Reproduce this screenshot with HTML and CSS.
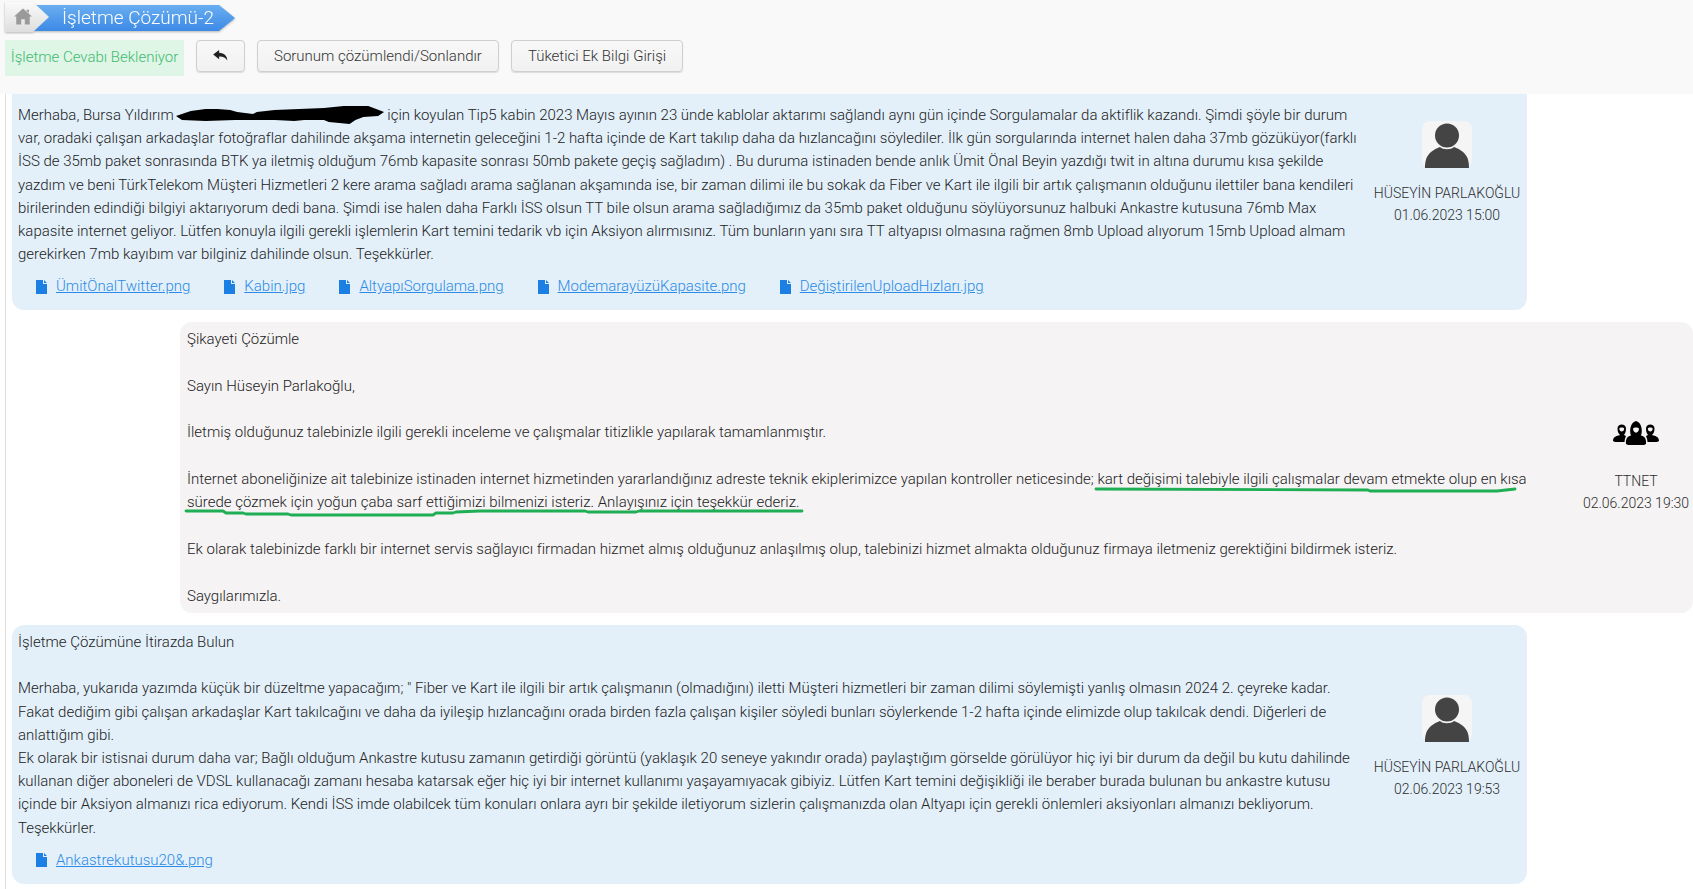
FILE: index.html
```html
<!DOCTYPE html>
<html lang="tr">
<head>
<meta charset="utf-8">
<title>İşletme Çözümü-2</title>
<link rel="stylesheet" href="styles.css">
</head>
<body>
<header class="topbar">
  <nav class="crumbs">
    <a class="crumb-home">
      <svg class="home-icon" viewBox="0 0 20 18" width="18" height="17"><path d="M10 0 L20 9 L17.5 9 L17.5 18 L12 18 L12 12 L8 12 L8 18 L2.5 18 L2.5 9 L0 9 Z M14 1.5 h2.5 v3.5 L14 3 Z" fill="#9a9a9a"/></svg>
    </a>
    <a class="crumb-page">İşletme Çözümü-2</a>
  </nav>
  <div class="actions">
    <span class="status">İşletme Cevabı Bekleniyor</span>
    <button class="btn btn-back" aria-label="Geri">
      <svg viewBox="0 0 16 12" width="15" height="11"><path d="M6.5 0 L0 5 L6.5 10 L6.5 7 C10.5 6.8 13.5 8 15.5 11.5 C15.3 6.5 12 3.2 6.5 3 Z" fill="#222"/></svg>
    </button>
    <button class="btn">Sorunum çözümlendi/Sonlandır</button>
    <button class="btn">Tüketici Ek Bilgi Girişi</button>
  </div>
</header>

<main class="thread">
  <article class="msg msg-user msg-first">
    <div class="msg-body">
      <p>Merhaba, Bursa Yıldırım<span class="redacted"><svg class="scribble" viewBox="0 0 215 18" preserveAspectRatio="none"><path d="M0 10 L15 5 L30 3 L42 3 L55 4 L62 6 L78 8 L82 6 L100 4 L125 3 L150 2 L170 0 L195 0 L211 6 L205 10 L190 11 L182 14 L176 18 L155 16 L150 14 L130 14 L120 15 L100 14 L60 14 L30 15 L6 14 Z" fill="#000"/></svg></span> için koyulan Tip5 kabin 2023 Mayıs ayının 23 ünde kablolar aktarımı sağlandı aynı gün içinde Sorgulamalar da aktiflik kazandı. Şimdi şöyle bir durum<br>
      var, oradaki çalışan arkadaşlar fotoğraflar dahilinde akşama internetin geleceğini 1-2 hafta içinde de Kart takılıp daha da hızlancağını söylediler. İlk gün sorgularında internet halen daha 37mb gözüküyor(farklı<br>
      İSS de 35mb paket sonrasında BTK ya iletmiş olduğum 76mb kapasite sonrası 50mb pakete geçiş sağladım) . Bu duruma istinaden bende anlık Ümit Önal Beyin yazdığı twit in altına durumu kısa şekilde<br>
      yazdım ve beni TürkTelekom Müşteri Hizmetleri 2 kere arama sağladı arama sağlanan akşamında ise, bir zaman dilimi ile bu sokak da Fiber ve Kart ile ilgili bir artık çalışmanın olduğunu ilettiler bana kendileri<br>
      birilerinden edindiği bilgiyi aktarıyorum dedi bana. Şimdi ise halen daha Farklı İSS olsun TT bile olsun arama sağladığımız da 35mb paket olduğunu söylüyorsunuz halbuki Ankastre kutusuna 76mb Max<br>
      kapasite internet geliyor. Lütfen konuyla ilgili gerekli işlemlerin Kart temini tedarik vb için Aksiyon alırmısınız. Tüm bunların yanı sıra TT altyapısı olmasına rağmen 8mb Upload alıyorum 15mb Upload almam<br>
      gerekirken 7mb kayıbım var bilginiz dahilinde olsun. Teşekkürler.</p>
      <ul class="files">
        <li><svg class="file-icon" viewBox="0 0 11 14"><path d="M0 0 H7 V4 H11 V14 H0 Z M8 0 L11 3 H8 Z" fill="#1b7fe3"/></svg><a>ÜmitÖnalTwitter.png</a></li>
        <li><svg class="file-icon" viewBox="0 0 11 14"><path d="M0 0 H7 V4 H11 V14 H0 Z M8 0 L11 3 H8 Z" fill="#1b7fe3"/></svg><a>Kabin.jpg</a></li>
        <li><svg class="file-icon" viewBox="0 0 11 14"><path d="M0 0 H7 V4 H11 V14 H0 Z M8 0 L11 3 H8 Z" fill="#1b7fe3"/></svg><a>AltyapıSorgulama.png</a></li>
        <li><svg class="file-icon" viewBox="0 0 11 14"><path d="M0 0 H7 V4 H11 V14 H0 Z M8 0 L11 3 H8 Z" fill="#1b7fe3"/></svg><a>ModemarayüzüKapasite.png</a></li>
        <li><svg class="file-icon" viewBox="0 0 11 14"><path d="M0 0 H7 V4 H11 V14 H0 Z M8 0 L11 3 H8 Z" fill="#1b7fe3"/></svg><a>DeğiştirilenUploadHızları.jpg</a></li>
      </ul>
    </div>
    <aside class="author author-user">
      <span class="avatar"><svg viewBox="0 0 50 47" width="50" height="47"><circle cx="25" cy="14.5" r="12" fill="#444"/><path d="M3 47 C3 45 3 40 5 36 C8 30 15 27 18 26 C21 29 29 29 32 26 C35 27 42 30 45 36 C47 40 47 45 47 47 Z" fill="#444"/></svg></span>
      <span class="who">HÜSEYİN PARLAKOĞLU</span>
      <span class="when">01.06.2023 15:00</span>
    </aside>
  </article>

  <article class="msg msg-company">
    <div class="msg-body">
      <p>Şikayeti Çözümle<br><br>
      Sayın Hüseyin Parlakoğlu,<br><br>
      İletmiş olduğunuz talebinizle ilgili gerekli inceleme ve çalışmalar titizlikle yapılarak tamamlanmıştır.<br><br>
      İnternet aboneliğinize ait talebinize istinaden internet hizmetinden yararlandığınız adreste teknik ekiplerimizce yapılan kontroller neticesinde; kart değişimi talebiyle ilgili çalışmalar devam etmekte olup en kısa<br>
      sürede çözmek için yoğun çaba sarf ettiğimizi bilmenizi isteriz. Anlayışınız için teşekkür ederiz.<br><br>
      Ek olarak talebinizde farklı bir internet servis sağlayıcı firmadan hizmet almış olduğunuz anlaşılmış olup, talebinizi hizmet almakta olduğunuz firmaya iletmeniz gerektiğini bildirmek isteriz.<br><br>
      Saygılarımızla.</p>
      <svg class="marker" viewBox="0 0 1400 60" width="1400" height="60"><path d="M910 15 L1182 16 L1184 17 L1311 17 L1329 15 M0 37 L37 37 L40 39 L57 39 L60 40 L102 40 L105 41 L247 41 L250 39 L267 39 L270 38 L294 37 L399 37 L402 38 L450 38 L453 37 L616 37" fill="none" stroke="#1fae54" stroke-width="2.8" stroke-linecap="round" stroke-linejoin="round"/></svg>
    </div>
    <aside class="author author-company">
      <svg class="team" viewBox="0 0 46 24" width="46" height="24"><path fill-rule="evenodd" fill="#000" d="M0 20 C0 16 3 15 7 14 C5 12 4.500 10 4.500 7.500 C4.500 2 13 2 13 7.500 C13 10 12.500 12 11 14 L13 15 C12 17 11.500 19 11.500 21 L2 21 Z M6.300 7.500 C6.300 11.500 11.200 11.500 11.200 7.500 C11 6 6.500 6 6.300 7.500 Z"/><path fill-rule="evenodd" fill="#000" d="M46 20 C46 16 43 15 39 14 C41 12 41.500 10 41.500 7.500 C41.500 2 33 2 33 7.500 C33 10 33.500 12 35 14 L33 15 C34 17 34.500 19 34.500 21 L44 21 Z M39.700 7.500 C39.700 11.500 34.800 11.500 34.800 7.500 C35 6 39.500 6 39.700 7.500 Z"/><path fill="#000" d="M13 23 C12.500 18 14 15.500 18 14.500 C16.500 11 16.500 2 23 0 C29.500 2 29.500 11 28 14.500 C32 15.500 33.500 18 33 23 L31 24 L15 24 Z"/><path fill="#f5f3f4" d="M20 7.500 C20 13 26 13 26 7.500 C25 6 21 6 20 7.500 Z"/></svg>
      <span class="who">TTNET</span>
      <span class="when">02.06.2023 19:30</span>
    </aside>
  </article>

  <article class="msg msg-user msg-last">
    <div class="msg-body">
      <p>İşletme Çözümüne İtirazda Bulun<br><br>
      Merhaba, yukarıda yazımda küçük bir düzeltme yapacağım; " Fiber ve Kart ile ilgili bir artık çalışmanın (olmadığını) iletti Müşteri hizmetleri bir zaman dilimi söylemişti yanlış olmasın 2024 2. çeyreke kadar.<br>
      Fakat dediğim gibi çalışan arkadaşlar Kart takılcağını ve daha da iyileşip hızlancağını orada birden fazla çalışan kişiler söyledi bunları söylerkende 1-2 hafta içinde elimizde olup takılcak dendi. Diğerleri de<br>
      anlattığım gibi.<br>
      Ek olarak bir istisnai durum daha var; Bağlı olduğum Ankastre kutusu zamanın getirdiği görüntü (yaklaşık 20 seneye yakındır orada) paylaştığım görselde görülüyor hiç iyi bir durum da değil bu kutu dahilinde<br>
      kullanan diğer aboneleri de VDSL kullanacağı zamanı hesaba katarsak eğer hiç iyi bir internet kullanımı yaşayamıyacak gibiyiz. Lütfen Kart temini değişikliği ile beraber burada bulunan bu ankastre kutusu<br>
      içinde bir Aksiyon almanızı rica ediyorum. Kendi İSS imde olabilcek tüm konuları onlara ayrı bir şekilde iletiyorum sizlerin çalışmanızda olan Altyapı için gerekli önlemleri aksiyonları almanızı bekliyorum.<br>
      Teşekkürler.</p>
      <ul class="files">
        <li><svg class="file-icon" viewBox="0 0 11 14"><path d="M0 0 H7 V4 H11 V14 H0 Z M8 0 L11 3 H8 Z" fill="#1b7fe3"/></svg><a>Ankastrekutusu20&amp;.png</a></li>
      </ul>
    </div>
    <aside class="author author-user">
      <span class="avatar"><svg viewBox="0 0 50 47" width="50" height="47"><circle cx="25" cy="14.5" r="12" fill="#444"/><path d="M3 47 C3 45 3 40 5 36 C8 30 15 27 18 26 C21 29 29 29 32 26 C35 27 42 30 45 36 C47 40 47 45 47 47 Z" fill="#444"/></svg></span>
      <span class="who">HÜSEYİN PARLAKOĞLU</span>
      <span class="when">02.06.2023 19:53</span>
    </aside>
  </article>
</main>
</body>
</html>
```
FILE: styles.css
```css
* { box-sizing: border-box; }
html, body { margin: 0; padding: 0; background: #fff; overflow: hidden; }
body {
  width: 1693px;
  height: 889px;
  font-family: Roboto, "Liberation Sans", sans-serif;
  font-weight: 300;
  font-size: 14px;
  line-height: 23.2px;
  color: #222;
}
.topbar {
  height: 94px;
  background: #f9f9f9;
  padding: 2px 0 0 5px;
}
.crumbs { display: flex; height: 30px; filter: drop-shadow(0 1px 1px rgba(0,0,0,.28)); }
.crumb-home {
  position: relative;
  z-index: 1;
  width: 44px;
  height: 30px;
  padding: 6px 0 0 9px;
  background: linear-gradient(#fafafa, #dedede);
  clip-path: polygon(0 0, 28px 0, 44px 15px, 28px 30px, 0 30px);
}
.home-icon { display: block; }
.crumb-page {
  margin: 3px 0 0 -16px;
  width: 202px;
  height: 26px;
  padding-left: 29px;
  background: linear-gradient(#69aef0, #3d8ae6);
  clip-path: polygon(0 0, 186px 0, 202px 13px, 186px 26px, 0 26px);
  color: #fff;
  font-size: 19px;
  line-height: 26px;
}
.actions {
  display: flex;
  align-items: flex-start;
  margin-top: 8px;
}
.status {
  width: 179px;
  height: 36px;
  background: #dff5e6;
  color: #3dbb70;
  font-size: 15px;
  line-height: 34px;
  text-align: center;
  margin-right: 12px;
}
.btn {
  height: 32px;
  padding: 0 16px;
  margin-right: 12px;
  background: linear-gradient(#f8f8f8, #f1f1f1);
  border: 1px solid #cfcfcf;
  border-radius: 4px;
  box-shadow: 0 1px 1px rgba(0,0,0,.12);
  font: 300 15px Roboto, sans-serif;
  color: #333;
}
.btn-back { width: 49px; padding: 0; }
.thread {
  margin-left: 5px;
  height: 795px;
  border-left: 1px solid #ddd;
  padding-left: 6px;
}
.msg { display: flex; border-radius: 0 0 12px 12px; }
.msg-user { width: 1515px; background: #e3f0fa; }
.msg-first { height: 216px; padding: 10px 0 0 6px; }
.msg-last { height: 259px; margin-top: 12px; padding: 6px 0 0 6px; border-radius: 12px; }
.msg-company {
  position: relative;
  margin: 12px 0 0 168px;
  width: 1513px;
  height: 291px;
  padding: 6px 0 0 7px;
  background: #f5f3f4;
  border-radius: 12px;
}
.msg-company .msg-body { line-height: 23.35px; }
.msg-body {
  position: relative;
  flex: 1;
  min-width: 0;
  white-space: nowrap;
  font-size: 15px;
  letter-spacing: -0.007px;
}
.msg-body p { margin: 0; }
.redacted { position: relative; display: inline-block; width: 210px; height: 0; }
.scribble {
  position: absolute;
  left: 2px;
  top: -14px;
  width: 212px;
  height: 18px;
}
.files {
  display: flex;
  gap: 34px;
  list-style: none;
  margin: 9px 0 0;
  padding: 0 0 0 18px;
}
.files li { display: flex; align-items: center; gap: 9px; }
.file-icon { width: 11px; height: 14px; flex: none; }
.files a { color: #2b8be6; text-decoration: underline; }
.marker { position: absolute; left: -1px; top: 146px; overflow: visible; pointer-events: none; }
.author {
  flex: none;
  display: flex;
  flex-direction: column;
  align-items: center;
  color: #2d2d2d;
}
.author-user { width: 160px; }
.msg-first .author-user { padding-top: 17px; }
.msg-last .author-user { padding-top: 64px; }
.author-company { width: 114px; padding-top: 93px; }
.avatar {
  width: 50px;
  height: 47px;
  background: #f5f5f5;
  border-radius: 8px;
  margin-bottom: 14px;
}
.avatar svg { display: block; }
.team { margin-bottom: 25px; }
.who, .when { display: block; white-space: nowrap; }
.who { line-height: 22px; }
.when { line-height: 22px; }
```
